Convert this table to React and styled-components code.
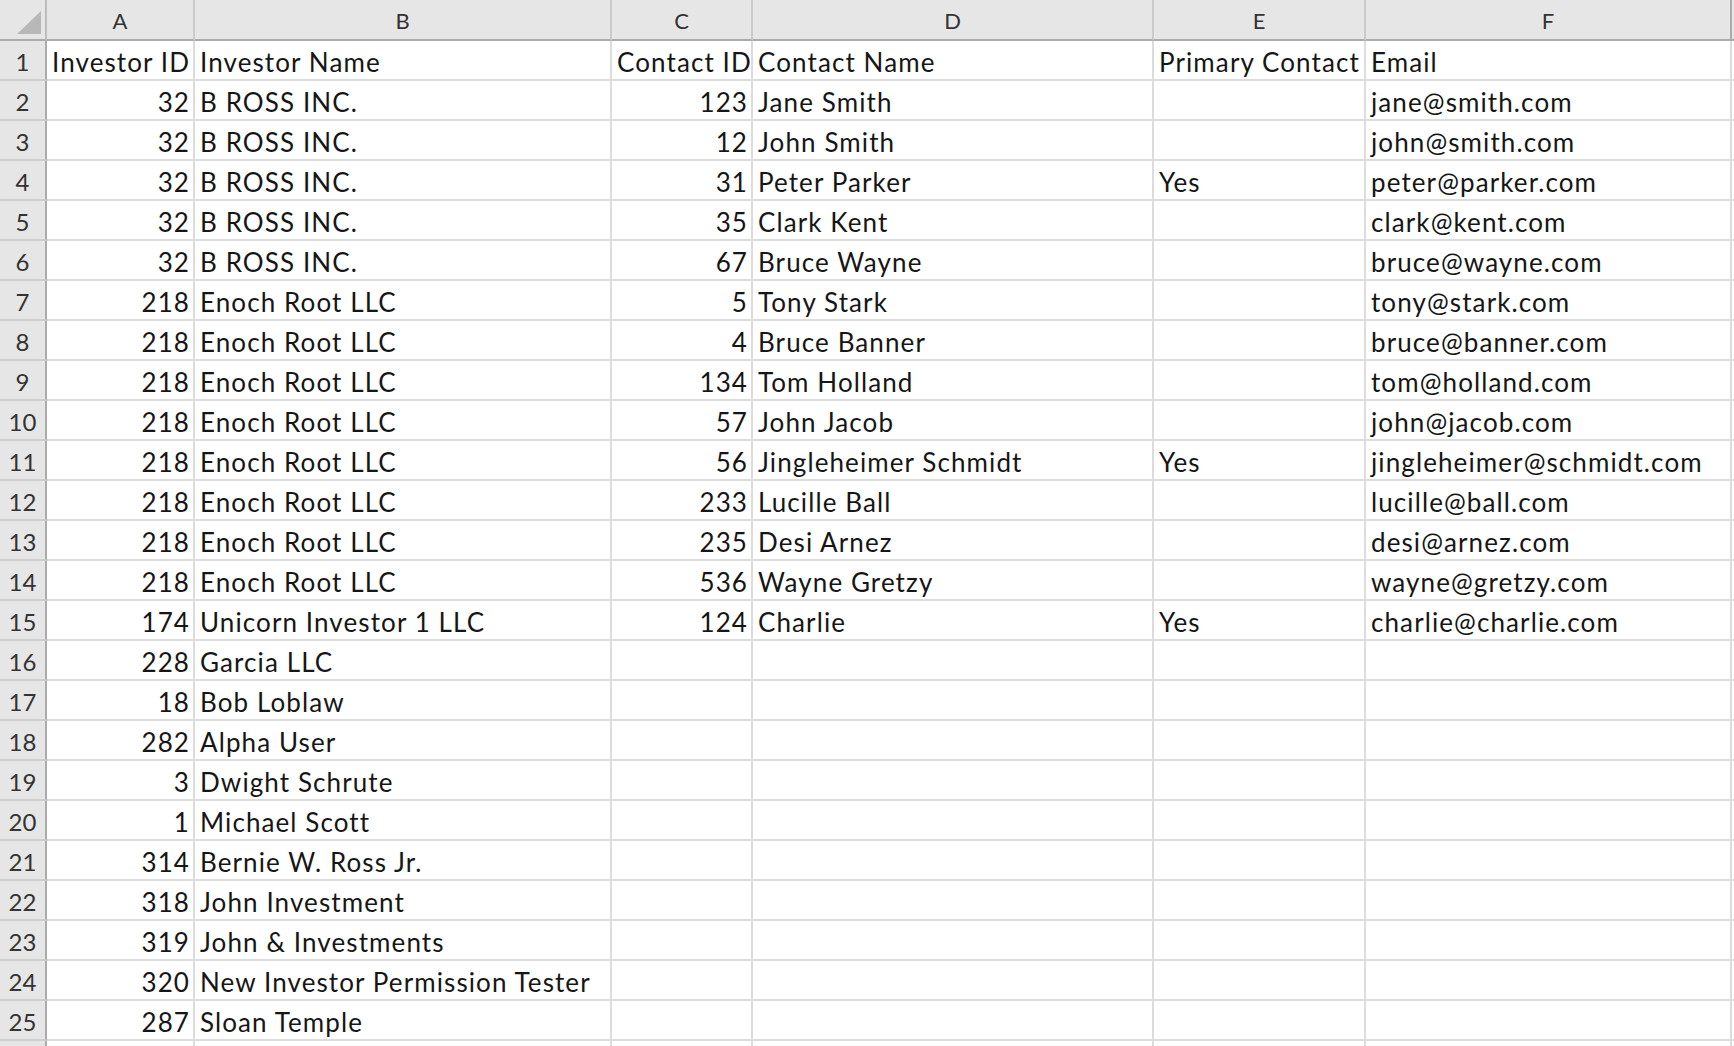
import React from 'react';
import styled, { createGlobalStyle } from 'styled-components';

const GlobalStyle = createGlobalStyle`
  html, body {
    margin: 0;
    padding: 0;
    background: #ffffff;
    overflow: hidden;
  }
`;

const COLUMNS = [
  { key: 'A', width: 148 },
  { key: 'B', width: 417 },
  { key: 'C', width: 141 },
  { key: 'D', width: 401 },
  { key: 'E', width: 212 },
  { key: 'F', width: 366 },
];

const ROWS = [
  ['Investor ID', 'Investor Name', 'Contact ID', 'Contact Name', 'Primary Contact', 'Email'],
  [32, 'B ROSS INC.', 123, 'Jane Smith', '', 'jane@smith.com'],
  [32, 'B ROSS INC.', 12, 'John Smith', '', 'john@smith.com'],
  [32, 'B ROSS INC.', 31, 'Peter Parker', 'Yes', 'peter@parker.com'],
  [32, 'B ROSS INC.', 35, 'Clark Kent', '', 'clark@kent.com'],
  [32, 'B ROSS INC.', 67, 'Bruce Wayne', '', 'bruce@wayne.com'],
  [218, 'Enoch Root LLC', 5, 'Tony Stark', '', 'tony@stark.com'],
  [218, 'Enoch Root LLC', 4, 'Bruce Banner', '', 'bruce@banner.com'],
  [218, 'Enoch Root LLC', 134, 'Tom Holland', '', 'tom@holland.com'],
  [218, 'Enoch Root LLC', 57, 'John Jacob', '', 'john@jacob.com'],
  [218, 'Enoch Root LLC', 56, 'Jingleheimer Schmidt', 'Yes', 'jingleheimer@schmidt.com'],
  [218, 'Enoch Root LLC', 233, 'Lucille Ball', '', 'lucille@ball.com'],
  [218, 'Enoch Root LLC', 235, 'Desi Arnez', '', 'desi@arnez.com'],
  [218, 'Enoch Root LLC', 536, 'Wayne Gretzy', '', 'wayne@gretzy.com'],
  [174, 'Unicorn Investor 1 LLC', 124, 'Charlie', 'Yes', 'charlie@charlie.com'],
  [228, 'Garcia LLC', '', '', '', ''],
  [18, 'Bob Loblaw', '', '', '', ''],
  [282, 'Alpha User', '', '', '', ''],
  [3, 'Dwight Schrute', '', '', '', ''],
  [1, 'Michael Scott', '', '', '', ''],
  [314, 'Bernie W. Ross Jr.', '', '', '', ''],
  [318, 'John Investment', '', '', '', ''],
  [319, 'John & Investments', '', '', '', ''],
  [320, 'New Investor Permission Tester', '', '', '', ''],
  [287, 'Sloan Temple', '', '', '', ''],
];

const Sheet = styled.div`
  display: grid;
  grid-template-columns: 47px ${COLUMNS.map((c) => `${c.width}px`).join(' ')} 1fr;
  grid-template-rows: 41px;
  grid-auto-rows: 40px;
  height: 100vh;
  overflow: hidden;
  font-family: Lato, 'Open Sans', 'Liberation Sans', sans-serif;
  color: #161616;
`;

const Corner = styled.div`
  position: relative;
  box-sizing: border-box;
  background: #e6e6e6;
  border-right: 2px solid #bdbdbd;
  border-bottom: 2px solid #ababab;
`;

const CornerMark = styled.svg`
  position: absolute;
  left: 17px;
  top: 11px;
`;

const ColHead = styled.div`
  box-sizing: border-box;
  background: #e6e6e6;
  border-right: 2px solid ${(p) => (p.$last ? '#ababab' : '#cbcbcb')};
  border-bottom: 2px solid #ababab;
  display: flex;
  align-items: center;
  justify-content: center;
  padding-top: 1px;
  font-size: 22px;
  color: #333333;
`;

const RowHead = styled.div`
  box-sizing: border-box;
  background: #e6e6e6;
  border-right: 2px solid #ababab;
  border-bottom: 2px solid #cfcfcf;
  text-align: center;
  font-size: 24px;
  line-height: 34px;
  padding-top: 4px;
  color: #333333;
`;

const Cell = styled.div`
  box-sizing: border-box;
  background: #ffffff;
  border-right: 2px solid #dcdcdc;
  border-bottom: 2px solid #dcdcdc;
  padding: 5px 3px 0 5px;
  font-size: 26px;
  line-height: 33px;
  letter-spacing: 1.1px;
  white-space: nowrap;
  text-align: ${(p) => (p.$numeric ? 'right' : 'left')};
`;

const Filler = styled.div`
  background: ${(p) => (p.$head ? '#e6e6e6' : '#ffffff')};
  border-bottom: 2px solid ${(p) => (p.$head ? '#ababab' : '#dcdcdc')};
  box-sizing: border-box;
`;

export default function App() {
  return (
    <>
      <GlobalStyle />
      <Sheet>
        <Corner>
          <CornerMark width="24" height="23" viewBox="0 0 24 23">
            <polygon points="0,23 24,0 24,23" fill="#b8b8b8" />
          </CornerMark>
        </Corner>
        {COLUMNS.map((c, i) => (
          <ColHead key={c.key} $last={i === COLUMNS.length - 1}>
            {c.key}
          </ColHead>
        ))}
        <Filler $head />
        {ROWS.map((row, r) => (
          <React.Fragment key={r}>
            <RowHead>{r + 1}</RowHead>
            {row.map((value, c) => (
              <Cell key={c} $numeric={typeof value === 'number'}>
                {value}
              </Cell>
            ))}
            <Filler />
          </React.Fragment>
        ))}
        {/* the next row only peeks in under the last one */}
        <RowHead />
        {COLUMNS.map((c) => (
          <Cell key={c.key} />
        ))}
        <Filler />
      </Sheet>
    </>
  );
}
